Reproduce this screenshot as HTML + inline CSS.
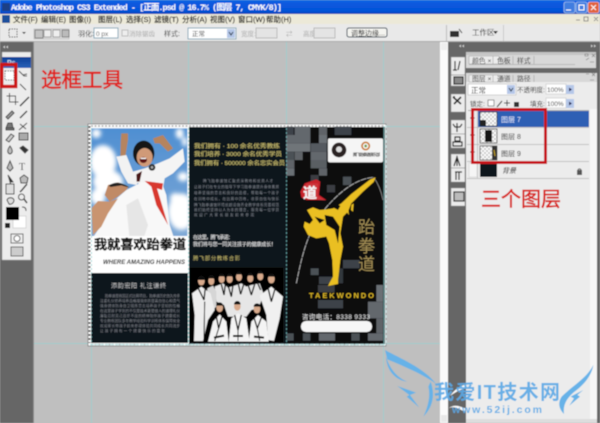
<!DOCTYPE html>
<html><head><meta charset="utf-8"><style>
html,body{margin:0;padding:0;background:#bfbfbf}
svg{display:block}
text{font-family:"Liberation Sans","Noto Sans CJK SC",sans-serif}
</style></head><body>
<svg width="600" height="423" viewBox="0 0 600 423" xmlns="http://www.w3.org/2000/svg">
<defs>
<linearGradient id="tb" x1="0" y1="0" x2="0" y2="1"><stop offset="0" stop-color="#1a6fe8"/><stop offset=".15" stop-color="#0a5be0"/><stop offset=".8" stop-color="#0553d8"/><stop offset="1" stop-color="#0a3fb0"/></linearGradient>
<linearGradient id="sky" x1="0" y1="0" x2="0" y2="1"><stop offset="0" stop-color="#4f8fd2"/><stop offset="1" stop-color="#7fa9d6"/></linearGradient>
<linearGradient id="bl" x1="0" y1="0" x2="0" y2="1"><stop offset="0" stop-color="#0d3f96"/><stop offset="1" stop-color="#2a62b8"/></linearGradient>
<pattern id="chk" width="4" height="4" patternUnits="userSpaceOnUse"><rect width="4" height="4" fill="#fff"/><rect width="2" height="2" fill="#ccc"/><rect x="2" y="2" width="2" height="2" fill="#ccc"/></pattern>
<filter id="b" x="-2%" y="-2%" width="104%" height="104%"><feGaussianBlur stdDeviation="0.45"/></filter>
<filter id="b2"><feGaussianBlur stdDeviation="6"/></filter>
<clipPath id="skyclip"><rect x="10" y="10" width="288" height="325"/></clipPath>
</defs>
<g filter="url(#b)">
<rect width="600" height="423" fill="#bfbfbf"/>
<rect y="0" width="600" height="14" fill="url(#tb)"/>
<rect y="14" width="600" height="11" fill="#ece9d8"/>
<rect y="24" width="600" height="18" fill="#e9e9e9"/>
<rect y="41" width="600" height="1" fill="#aaa"/>
<rect x="2" y="3" width="8" height="8" fill="#1b3f86"/>
<text x="11" y="10" font-size="8.500" fill="#fff" font-weight="bold" textLength="271" lengthAdjust="spacing" style="font-family:'Liberation Mono','Noto Sans CJK SC',monospace">Adobe Photoshop CS3 Extended - [正面.psd @ 16.7% (图层 7, CMYK/8)]</text>
<rect x="564" y="2" width="11" height="11" rx="2" fill="#3f7de0" stroke="#cde" stroke-width=".6"/>
<rect x="576" y="2" width="11" height="11" rx="2" fill="#3f7de0" stroke="#cde" stroke-width=".6"/>
<rect x="588" y="2" width="11" height="11" rx="2" fill="#e2603a" stroke="#fde" stroke-width=".6"/>
<path d="M566 10h5M579 5h5v5h-5zM591 5l5 5M596 5l-5 5" stroke="#fff" stroke-width="1" fill="none"/>
<rect x="2" y="15" width="8" height="8" fill="#1b4f9c"/>
<g font-size="7.500" fill="#111" stroke="#111" stroke-width=".15">
<text x="13" y="22">文件(F)</text><text x="41" y="22">编辑(E)</text><text x="69" y="22">图像(I)</text><text x="98" y="22">图层(L)</text><text x="126" y="22">选择(S)</text><text x="154" y="22">滤镜(T)</text><text x="182" y="22">分析(A)</text><text x="210" y="22">视图(V)</text><text x="238" y="22">窗口(W)</text><text x="266" y="22">帮助(H)</text>
</g>
<path d="M576 20h4M584 17h4v4h-4zM594 17l4 4M598 17l-4 4" stroke="#777" stroke-width=".8" fill="none"/>
<rect x="9" y="29" width="8" height="8" fill="none" stroke="#444" stroke-dasharray="1.500 1"/>
<path d="M22 32l2 2 2-2z" fill="#333"/>
<rect x="34" y="29" width="35" height="10" fill="#ddd" stroke="#aaa" stroke-width=".5"/>
<rect x="35" y="30" width="8" height="8" fill="#c4c4c4" stroke="#555" stroke-width=".6"/>
<rect x="44" y="30" width="7" height="7" fill="#eee" stroke="#777" stroke-width=".6"/>
<rect x="53" y="30" width="7" height="7" fill="#eee" stroke="#777" stroke-width=".6"/>
<rect x="62" y="30" width="7" height="7" fill="#bbb" stroke="#555" stroke-width=".6"/>
<text x="78" y="36" font-size="7" fill="#333">羽化:</text>
<rect x="94" y="28" width="24" height="10" fill="#fff" stroke="#8ab"/>
<text x="96" y="36" font-size="6.500" fill="#555">0 px</text>
<rect x="122" y="30" width="6" height="6" fill="#eee" stroke="#bbb"/>
<text x="129" y="36" font-size="6.500" fill="#aaa">消除锯齿</text>
<text x="164" y="36" font-size="7" fill="#333">样式:</text>
<rect x="188" y="28" width="48" height="11" fill="#fff" stroke="#8ab"/>
<text x="192" y="36" font-size="6.500" fill="#333">正常</text>
<rect x="227" y="29" width="8" height="9" fill="#b5c7e8"/><path d="M229 32l2 3 2-3" stroke="#234" fill="none"/>
<text x="241" y="36" font-size="6.500" fill="#aaa">宽度:</text>
<rect x="256" y="28" width="21" height="10" fill="#e4e4e4" stroke="#bbb"/>
<text x="286" y="36" font-size="6.500" fill="#aaa">⇄</text>
<text x="303" y="36" font-size="6.500" fill="#aaa">高度:</text>
<rect x="314" y="28" width="21" height="10" fill="#e4e4e4" stroke="#bbb"/>
<rect x="347" y="28" width="40" height="9" rx="2" fill="#f4f4f0" stroke="#345"/>
<text x="351" y="35.500" font-size="7" fill="#222">调整边缘...</text>
<rect x="446" y="25" width="1" height="16" fill="#bbb"/>
<rect x="450" y="31" width="9" height="6" fill="#333"/><path d="M459 29l3 4" stroke="#333"/>
<text x="472" y="35" font-size="7.500" fill="#222">工作区</text><path d="M493 31l5 0-2.500 3z" fill="#222"/>
<rect x="503" y="25" width="1" height="16" fill="#ccc"/>
<rect x="0" y="42" width="34" height="381" fill="#666"/>
<rect x="33" y="42" width="1" height="381" fill="#888"/>
<path d="M3 47l2-1.500v3zM6 47l2-1.500v3z" fill="#ccc"/>
<rect x="2" y="52" width="29" height="208" fill="#ececec" stroke="#999" stroke-width=".5"/>
<rect x="2" y="57" width="29" height="11" fill="url(#bl)"/>
<text x="7" y="65" font-size="7" fill="#cde" font-weight="bold">Ps</text>
<g stroke="#444" fill="none" stroke-width="1">
<rect x="5" y="71" width="9" height="9" stroke="#666" stroke-dasharray="1.500 1" fill="#fff"/>
<path d="M19 71l5 5h3M23 75l4-1"/>
<path d="M20 84l6 6"/>
<path d="M9.500 93v9h9M6.500 96h9v9"/>
<path d="M20 106l7-7 2-2" stroke-width="1.500"/>
<path d="M6 117l6-6 2 2-6 6z" fill="#999"/>
<path d="M20 118l7-7" stroke-width="1.400"/>
<path d="M8 123h4l1 5H6zM6 128h8v2H6z" fill="#777"/>
<path d="M19 130l8-7M20 124l6 5"/>
<path d="M6 140l5-6 3 2-5 6z" fill="#ccc"/>
<rect x="19" y="133" width="9" height="7" fill="#aaa"/>
<path d="M10 146c3 4 3 7 0 8-3-1-3-4 0-8z" fill="#bbb"/>
<path d="M20 148l5 5 3-3-5-4z" fill="#333"/>
<path d="M10 161l3 7-3 3-3-3z" fill="#bbb"/>
<text x="19" y="170" font-size="10" fill="#333" stroke="none" style="font-family:'Liberation Serif',serif">T</text>
<path d="M8 175l5 7-3 0 1 3z" fill="#222"/>
<path d="M20 178l4-3 4 3-1 5h-6z" fill="#bbb"/>
<path d="M6 184h8v10H6z" fill="#ddd"/>
<path d="M27 184l-5 6-2 2" stroke-width="1.500"/>
<path d="M7 200c1-3 6-3 7 0 0 3-3 5-5 4z" fill="#ddd"/>
<circle cx="21.500" cy="197" r="3"/>
<path d="M24 199l3 4" stroke-width="1.500"/>
</g>
<rect x="13" y="216" width="13" height="12" fill="#fff" stroke="#bbb" stroke-width=".5"/>
<rect x="6" y="207" width="13" height="13" fill="#000"/>
<path d="M22 207c3 0 4 1 4 4" stroke="#333" fill="none"/>
<rect x="5" y="223" width="5" height="5" fill="#222"/>
<rect x="11" y="234" width="12" height="9" fill="#eee" stroke="#666"/><circle cx="17" cy="238.500" r="3" fill="#fff" stroke="#666"/>
<rect x="11" y="247" width="12" height="9" fill="#ccc" stroke="#666"/>
<g stroke="#a0cccc" stroke-width="1">
<path d="M91.500 42V423M188.500 42V124M286.500 42V124M383.500 42V423M34 126.500H440M34 343.500H440"/>
</g>
<rect x="88" y="124" width="298" height="222" fill="#fff" stroke="#444" stroke-width=".5"/>
<!-- left photo, coordinates from crop -->
<g transform="translate(88,125) scale(.33333)">
<rect x="10" y="10" width="288" height="325" fill="url(#sky)"/>
<g clip-path="url(#skyclip)"><g fill="#fff" filter="url(#b2)">
<ellipse cx="45" cy="110" rx="40" ry="50"/><ellipse cx="60" cy="170" rx="45" ry="35"/><ellipse cx="30" cy="215" rx="22" ry="25"/>
<ellipse cx="280" cy="260" rx="40" ry="55"/><ellipse cx="262" cy="220" rx="16" ry="16"/><ellipse cx="285" cy="155" rx="16" ry="14"/>
<ellipse cx="275" cy="25" rx="12" ry="16"/><ellipse cx="25" cy="25" rx="14" ry="14"/><ellipse cx="290" cy="50" rx="8" ry="14"/>
</g></g>
<path d="M100 25L120 25 120 45 112 95 97 95 98 50Z" fill="#b5845f"/>
<path d="M195 40L225 30 255 70 240 80 215 55 200 55Z" fill="#b5845f"/>
<path d="M85 95L115 90 135 140 155 165 145 180 120 175 100 140Z" fill="#f2f2f2"/>
<path d="M135 140L170 130 210 115 245 100 285 70 290 110 255 145 230 160 225 190 150 175Z" fill="#f4f4f4"/>
<ellipse cx="167" cy="85" rx="32" ry="38" fill="#141414"/>
<ellipse cx="170" cy="97" rx="24" ry="28" fill="#d09a78"/>
<ellipse cx="166" cy="105" rx="11" ry="9" fill="#5e1414"/>
<rect x="158" y="98" width="16" height="4" fill="#fff"/>
<circle cx="192" cy="127" r="10" fill="#2a2a2a"/><circle cx="192" cy="127" r="4" fill="#aaa"/>
<path d="M145 148L162 138 155 170 146 170Z" fill="#4a1818"/>
<path d="M10 345L40 300 75 230 115 195 160 172 220 170 235 210 245 300 260 345Z" fill="#f8f8f8"/>
<path d="M115 240L150 220 180 300 165 345 125 345Z" fill="#e6e6e6"/>
<path d="M10 250L30 228 65 230 90 220 60 265 40 305 15 330Z" fill="#c9946f"/>
<path d="M50 210L60 180 90 172 122 185 115 195 90 215 65 230Z" fill="#c08a66"/>
<path d="M62 182Q90 162 125 188L100 181 68 186Z" fill="#222"/>
<path d="M170 168L225 175 222 195 207 190 225 250 240 300 205 240 190 185Z" fill="#d8392e"/>
</g>
<rect x="91" y="236" width="97" height="37" fill="#fff"/>
<text x="94" y="249" font-size="13.200" font-weight="bold" fill="#111" textLength="92" stroke="#111" stroke-width=".35">我就喜欢跆拳道</text>
<text x="103" y="264" font-size="6" font-weight="bold" font-style="italic" fill="#222" textLength="82">WHERE AMAZING HAPPENS</text>
<rect x="91" y="273" width="97" height="70" fill="#10161f"/>
<text x="111" y="288" font-size="6.200" fill="#c9c9c9" textLength="55">添韵宏阳  礼注谦终</text>
<g font-size="3.600" fill="#85888d">
<text x="105" y="297" textLength="75">跆拳道是我国正式比赛项目，跆拳道历史悠久传承</text>
<text x="100" y="302" textLength="80">注重礼仪修养培养品格增强体质提高自信心和勇气</text>
<text x="100" y="307" textLength="80">强身健体防身自卫锻炼意志培养孩子坚韧的性格</text>
<text x="100" y="312" textLength="80">在这里孩子学到的不仅是技术更是做人的道理礼仪</text>
<text x="100" y="317" textLength="80">廉耻忍耐克己百折不屈的精神陪伴孩子健康成长</text>
<text x="100" y="322" textLength="80">专业教练团队多年教学经验科学训练体系保障安全</text>
<text x="100" y="327" textLength="80">欢迎家长带孩子前来参观体验共同成长共同进步</text>
<text x="100" y="332" textLength="65">让孩子拥有一个健康快乐的童年</text>
</g>
<path d="M89.500 126V343" stroke="#555" stroke-width="2" stroke-dasharray="2 2" fill="none"/>
<path d="M91 126H385M91 344.500H385" stroke="#aaa" stroke-width="1.500" stroke-dasharray="2 1.500" fill="none"/>
<!-- middle -->
<rect x="189" y="127" width="98" height="217" fill="#0e151e"/>
<g font-size="5.900" fill="#cfc270" stroke="#cfc270" stroke-width=".12">
<text x="194" y="148" textLength="86" lengthAdjust="spacingAndGlyphs">我们拥有 · 100 余名优秀教练</text>
<text x="194" y="156" textLength="88" lengthAdjust="spacingAndGlyphs">我们培养 · 3000 余名优秀学员</text>
<text x="194" y="165" textLength="91" lengthAdjust="spacingAndGlyphs">我们拥有 · 500000 余名忠实会员</text>
</g>
<g font-size="3.500" fill="#8b9096">
<text x="203" y="182" textLength="70">腾飞跆拳道馆汇聚资深教练和优秀人才</text>
<text x="194" y="188" textLength="85">让孩子们在专业的指导下学习跆拳道提升身体素质</text>
<text x="194" y="194" textLength="85">培养坚强的意志和良好的品德，帮助每一个孩子</text>
<text x="194" y="200" textLength="85">在训练中成长，在比赛中历练，收获自信与快乐</text>
<text x="194" y="206" textLength="85">腾飞跆拳道馆环境优越设施齐全教学体系完善规范</text>
<text x="194" y="211" textLength="85">我们始终坚持以人为本的理念，服务每一位学员</text>
<text x="194" y="216" textLength="60">欢迎广大家长朋友前来参观</text>
</g>
<g font-size="5" fill="#e6e6e6" stroke="#e6e6e6" stroke-width=".1">
<text x="193" y="239" textLength="40">在这里，腾飞承诺：</text>
<text x="193" y="246" textLength="83">我们将与您一同关注孩子的健康成长！</text>
</g>
<text x="193" y="260" font-size="5.300" fill="#cfc270" textLength="47">腾飞部分教练合影</text>
<!-- team, coordinates from crop -->
<g transform="translate(188,265) scale(.33333)">
<rect x="6" y="8" width="280" height="224" fill="#060606"/>
<path d="M80 65L105 55 120 68 140 62 160 55 175 65 190 60 215 55 228 90 210 130 190 135 175 155 120 155 108 120 85 110Z" fill="#e6e6e6"/>
<path d="M58 70L75 62 85 80 85 125 70 140 58 100Z" fill="#d6d6d6"/>
<path d="M12 85L40 65 68 85 80 135 60 165 45 228 18 228 20 150Z" fill="#ededed"/>
<path d="M215 92L250 65 285 95 275 160 258 228 240 225 235 150Z" fill="#f0f0f0"/>
<path d="M60 230L75 170 95 148 115 170 122 230Z" fill="#f4f4f4"/>
<path d="M122 230L130 160 150 145 175 160 185 230Z" fill="#f4f4f4"/>
<path d="M182 230L190 170 210 150 235 170 242 230Z" fill="#f4f4f4"/>
<g fill="#d8aa8c">
<ellipse cx="40" cy="48" rx="10" ry="13"/><ellipse cx="70" cy="48" rx="9" ry="12"/><ellipse cx="101" cy="42" rx="9" ry="12"/><ellipse cx="125" cy="42" rx="9" ry="12"/><ellipse cx="153" cy="36" rx="9" ry="12"/><ellipse cx="187" cy="40" rx="9" ry="12"/><ellipse cx="217" cy="34" rx="9" ry="12"/><ellipse cx="250" cy="42" rx="10" ry="13"/>
<ellipse cx="95" cy="128" rx="10" ry="13"/><ellipse cx="148" cy="124" rx="10" ry="13"/><ellipse cx="207" cy="132" rx="10" ry="13"/>
</g>
<g fill="#0b0b0b">
<path d="M29 45a11 13 0 0 1 22 0zM60 40a10 10 0 0 1 20 0zM92 34a9 9 0 0 1 18 0zM116 34a9 9 0 0 1 18 0zM144 28a9 9 0 0 1 18 0zM178 32a9 9 0 0 1 18 0zM208 26a9 9 0 0 1 18 0zM240 35a10 10 0 0 1 20 0zM85 122a10 10 0 0 1 20 0zM138 118a10 10 0 0 1 20 0zM197 125a10 10 0 0 1 20 0z"/>
</g>
<g stroke="#111" stroke-width="4" fill="none">
<path d="M30 68L48 105M52 68L48 105M240 68L250 110M262 68L250 110M100 58L108 90M112 58L108 90M120 60L130 95M135 60L130 95M150 52L158 88M168 55L158 88M180 58L190 90M200 58L190 90M208 52L218 75"/>
<path d="M85 155L92 190 102 155M140 150L150 195 160 150M198 158L208 190 220 158" />
<path d="M50 110L48 228M92 190L80 228M150 195L150 228M208 190L215 228" stroke-width="3"/>
<path d="M78 218L108 212M135 213L165 213M198 215L228 218" stroke-width="6"/>
</g>
</g>
<!-- right -->
<rect x="287" y="127" width="98" height="217" fill="#0a0b0f"/>
<g transform="translate(283,120) scale(.33333)">
<g fill="#555a60">
<rect x="10" y="20" width="22" height="25" fill="#3d4248"/><rect x="35" y="20" width="47" height="25" fill="#63686d"/><rect x="108" y="20" width="24" height="25" fill="#5e6368"/><rect x="155" y="20" width="50" height="25" fill="#3d4248"/>
<rect x="10" y="45" width="72" height="25" fill="#63686d"/><rect x="108" y="45" width="24" height="25" fill="#6a6f74"/>
<rect x="10" y="70" width="72" height="25" fill="#6f7479"/><rect x="83" y="70" width="48" height="25" fill="#555a60"/><rect x="132" y="70" width="24" height="25" fill="#33373c"/>
<rect x="10" y="95" width="24" height="25" fill="#4c5157"/><rect x="35" y="95" width="24" height="25" fill="#5e6368"/><rect x="83" y="95" width="48" height="25" fill="#63686d"/>
<rect x="10" y="120" width="24" height="25" fill="#5e6368"/><rect x="83" y="120" width="48" height="25" fill="#5a5f64"/>
<rect x="10" y="145" width="24" height="22" fill="#6a6f74"/><rect x="108" y="145" width="24" height="22" fill="#5e6368"/>
<rect x="83" y="165" width="24" height="25" fill="#3a3e43"/><rect x="180" y="170" width="25" height="25" fill="#4c5157"/><rect x="132" y="195" width="24" height="22" fill="#3a3e43"/>
<rect x="180" y="420" width="50" height="25" fill="#3d4248"/><rect x="83" y="445" width="24" height="20" fill="#4c5157"/><rect x="108" y="470" width="48" height="22" fill="#3d4248"/><rect x="156" y="445" width="24" height="45" fill="#33373c"/><rect x="105" y="495" width="50" height="22" fill="#3a3e43"/>
<rect x="280" y="495" width="20" height="50" fill="#6a6f74"/><rect x="255" y="545" width="45" height="50" fill="#63686d"/><rect x="280" y="595" width="20" height="45" fill="#5e6368"/><rect x="105" y="540" width="75" height="25" fill="#3d4248"/>
<rect x="10" y="640" width="22" height="22" fill="#4c5157"/><rect x="60" y="640" width="22" height="22" fill="#4c5157"/><rect x="108" y="640" width="48" height="22" fill="#63686d"/><rect x="205" y="640" width="25" height="22" fill="#4c5157"/><rect x="255" y="640" width="45" height="22" fill="#63686d"/>
</g>
<rect x="135" y="55" width="165" height="72" rx="5" fill="#f5f5f5"/>
<circle cx="168" cy="90" r="22" fill="#2a2022"/><circle cx="168" cy="88" r="9" fill="#ddd"/>
<circle cx="248" cy="78" r="11" fill="none" stroke="#c87a28" stroke-width="5"/><circle cx="248" cy="78" r="4" fill="#6a9a3a"/>
<path d="M52 215L65 190 100 178 112 185 108 225 130 240 70 240 55 232Z" fill="#c8222a"/>
<path d="M70 190L105 190 105 228 130 243 60 232Z" fill="#d85a5a" opacity=".35"/>
<path d="M40 490C60 390 80 310 150 240 190 200 230 175 272 172" stroke="#b8b8b8" stroke-width="2.500" stroke-dasharray="18 2" fill="none"/>
<path d="M272 172C285 190 295 215 300 240" stroke="#999" stroke-width="2" fill="none"/>
<path d="M278 172L272 186 240 215 205 250 195 275 180 290 172 340 180 380 172 420 165 480 165 492 135 498 140 488 150 470 148 420 138 370 130 350 100 355 75 345 62 320 65 305 80 312 90 300 72 270 90 262 110 270 130 268 150 265 175 250 205 222 240 195 262 178Z" fill="#eabf22"/>
<path d="M125 285L150 290 170 320 165 370 155 330 130 315ZM95 290L125 300 110 310ZM150 262L158 250 172 258 165 270Z" fill="#0a0b0f"/>
<path d="M205 255L212 250 210 275 204 270ZM190 275L196 270 198 285Z" fill="#eabf22"/>
</g>
<text x="303" y="198" font-size="14" font-weight="bold" fill="#f4f4f4" stroke="#f4f4f4" stroke-width=".3">道</text>
<text x="353" y="156" font-size="4" fill="#444" font-weight="bold" textLength="27">腾飞跆拳道俱乐部</text>
<text x="358" y="233" font-size="17" fill="#a08b52">跆</text>
<text x="358" y="252" font-size="17" fill="#a08b52">拳</text>
<text x="358" y="270" font-size="17" fill="#a08b52">道</text>
<text x="309" y="298" font-size="7.500" font-weight="bold" fill="#dcb628" textLength="65">TAEKWONDO</text>
<text x="302" y="319" font-size="6.500" fill="#e8e8e8" textLength="68">咨询电话：8338 9333</text>
<rect x="301" y="321" width="71" height="11" rx="5" fill="#f6f6f6"/>
<path d="M90 344.500H386" stroke="#bfe6e6" stroke-width="1.500" stroke-dasharray="4 1" fill="none"/>
<path d="M386 125V345" stroke="#c8e0e0" stroke-width="1.500" stroke-dasharray="3 2" fill="none"/>
<path d="M384 126V345" stroke="#8fd4d4" stroke-width=".7" fill="none"/>
<path d="M91.500 128V345M188.500 128V345M286.500 128V345" stroke="#7fcccc" stroke-width=".7" stroke-dasharray="2 2" fill="none"/>
<text x="41" y="87" font-size="20.500" fill="#e0201c" stroke="#e0201c" stroke-width=".5" textLength="82">选框工具</text>
<rect x="1.700" y="64.500" width="14" height="22" fill="none" stroke="#cc1518" stroke-width="3.400"/>
<rect x="440" y="42" width="8" height="381" fill="#fbfbfb"/>
<rect x="441" y="43" width="6" height="7" fill="#eee"/>
<rect x="441" y="415" width="6" height="7" fill="#e8e8e8"/>
<rect x="448" y="42" width="152" height="381" fill="#666"/>
<path d="M462 46l2-1.500v3zM459 46l2-1.500v3zM593 46l-2-1.500v3zM596 46l-2-1.500v3z" fill="#ccc"/>
<g fill="#ececec" stroke="#888" stroke-width=".5">
<rect x="451" y="57" width="14" height="18"/><rect x="451" y="75" width="14" height="11"/>
<rect x="451" y="94" width="14" height="18"/>
<rect x="451" y="120" width="14" height="14"/><rect x="451" y="134" width="14" height="14"/>
<rect x="451" y="154" width="14" height="14"/><rect x="451" y="168" width="14" height="14"/>
<rect x="451" y="188" width="14" height="18"/>
</g>
<g stroke="#222" fill="none" stroke-width="1.200">
<path d="M455 61v9M460 61l-2 9M453 70h4"/>
<rect x="454" y="77" width="9" height="7" fill="#888"/>
<path d="M453 97l8 7M461 97l-7 7M453 97l2 0" stroke-width="1.600"/>
<path d="M457 123v9M453 124l2 3h5l2-3"/>
<path d="M455 137h5v4h-5zM453 142h9v4h-9z"/>
<path d="M454 166l3-9 3 9M457 156v10"/>
<path d="M455 172h7M456 172v8M459 172v8"/>
<rect x="454" y="192" width="10" height="9" fill="#bbb"/>
</g>
<rect x="466" y="52" width="130" height="16" fill="#d8d8d8"/>
<rect x="466" y="52" width="130" height="3" fill="#c4c4c4"/>
<path d="M469 56h30l2 8h-32z" fill="#ececec" stroke="#999" stroke-width=".5"/>
<text x="472" y="63" font-size="6.800" fill="#333">颜色 ×</text>
<text x="497" y="63" font-size="6.800" fill="#333">色板</text><text x="517" y="63" font-size="6.800" fill="#333">样式</text>
<path d="M493 56v8M513 56v8M534 56v8M469 64.500H575" stroke="#999" stroke-width=".5"/>
<path d="M585 54h3v2h-3zM592 54l3 3M595 54l-3 3M590 62h4M589 58l-3 2" stroke="#777" stroke-width=".6" fill="none"/>
<rect x="466" y="73" width="131" height="350" fill="#ececec"/>
<rect x="466" y="73" width="131" height="9" fill="#d8d8d8"/>
<path d="M469 75h30l2 7h-32z" fill="#ececec" stroke="#aaa" stroke-width=".5"/>
<text x="472" y="81" font-size="6.800" fill="#333">图层 ×</text>
<text x="497" y="81" font-size="6.800" fill="#333">通道</text><text x="517" y="81" font-size="6.800" fill="#333">路径</text>
<path d="M493 75v7M513 75v7M534 75v7" stroke="#999" stroke-width=".5"/>
<path d="M586 74h3M592 73l3 3M595 73l-3 3M590 80h4" stroke="#777" stroke-width=".6" fill="none"/>
<rect x="468" y="84" width="48" height="11" fill="#fff" stroke="#bbb" stroke-width=".6"/>
<text x="471" y="93" font-size="7.500" fill="#222">正常</text>
<rect x="507" y="85" width="8" height="9" fill="#b5c7e8"/><path d="M509 88l2 3 2-3" stroke="#234" fill="none"/>
<text x="517" y="92" font-size="6.500" fill="#222">不透明度:</text>
<rect x="546" y="84" width="20" height="10" fill="#fff" stroke="#bbb" stroke-width=".5"/><text x="547" y="92" font-size="6.500" fill="#333">100%</text>
<rect x="566" y="85" width="8" height="9" fill="#b5c7e8"/><path d="M569 87.500l3 2-3 2z" fill="#225"/>
<text x="470" y="106" font-size="6.500" fill="#222">锁定:</text>
<rect x="488" y="100" width="6" height="6" fill="#fff" stroke="#555" stroke-width=".6"/>
<path d="M497 107l5-6M504 103h6M507 100v6" stroke="#333" fill="none"/>
<rect x="514" y="102" width="5" height="5" fill="#333"/>
<text x="530" y="106" font-size="6.500" fill="#222">填充:</text>
<rect x="546" y="98" width="20" height="10" fill="#fff" stroke="#bbb" stroke-width=".5"/><text x="547" y="106" font-size="6.500" fill="#333">100%</text>
<rect x="566" y="99" width="8" height="9" fill="#b5c7e8"/><path d="M569 101.500l3 2-3 2z" fill="#225"/>
<rect x="468" y="110" width="121" height="1" fill="#aaa"/>
<rect x="478" y="111" width="111" height="16" fill="#2f5fb4"/>
<path d="M467 127.500H589M467 144.500H589M467 161.500H589M467 178.500H589M477.500 111V178" stroke="#b5b5b5" stroke-width=".7"/>
<path d="M470 118l2-2 3 2-3 2z M470 135l2-2 3 2-3 2z M470 152l2-2 3 2-3 2z" fill="#333"/>
<rect x="469" y="163" width="8" height="14" fill="#f5f5f5" stroke="#ccc" stroke-width=".5"/>
<rect x="480" y="112" width="17" height="14" fill="url(#chk)" stroke="#222" stroke-width=".6"/>
<rect x="480" y="120" width="6" height="6" fill="#222"/>
<rect x="480" y="129" width="17" height="14" fill="url(#chk)" stroke="#222" stroke-width=".6"/>
<rect x="485" y="130" width="7" height="12" fill="#151515"/>
<rect x="480" y="146" width="17" height="14" fill="url(#chk)" stroke="#222" stroke-width=".6"/>
<rect x="492" y="146" width="5" height="14" fill="#333"/><path d="M494 150l1 6" stroke="#c9a520"/>
<rect x="480" y="163" width="17" height="14" fill="#0e151e"/>
<text x="501" y="122" font-size="7" fill="#dfe8ff">图层 7</text>
<text x="501" y="139" font-size="7" fill="#222">图层 8</text>
<text x="501" y="156" font-size="7" fill="#222">图层 9</text>
<text x="502" y="173" font-size="7" fill="#222" font-style="italic">背景</text>
<rect x="577" y="170" width="5" height="5" fill="#555"/><path d="M578 170a1.600 1.800 0 0 1 3 0" stroke="#555" fill="none"/>
<rect x="472.500" y="109.500" width="73" height="53" fill="none" stroke="#c6161a" stroke-width="3"/>
<text x="481" y="206" font-size="20" fill="#d8201c" stroke="#d8201c" stroke-width=".5" textLength="80">三个图层</text>
<rect x="590" y="109" width="7" height="314" fill="#f6f6f6"/>
<rect x="597" y="42" width="3" height="381" fill="#666"/>
<rect x="466" y="419" width="131" height="4" fill="#ddd"/>
<!-- watermark -->
<g transform="translate(360,340) scale(.33333)" fill="#66b2e8">
<path d="M75 30C120 55 195 85 228 132 195 105 130 78 82 58Z"/>
<path d="M78 50C90 90 115 115 142 125 110 122 80 95 78 50Z"/>
<path d="M112 138L168 158 150 165 178 203 140 170 148 165Z"/>
<path d="M212 125C228 170 215 205 190 230 205 200 212 165 205 140Z"/>
<path d="M700 75C680 115 640 135 605 170 592 190 598 208 612 222 608 195 620 172 650 150 675 130 695 105 700 75Z"/>
<path d="M670 150L632 170 642 175 628 197 660 170 652 165Z"/>
<path d="M270 168C285 148 300 138 316 134L316 146C300 148 285 158 270 168Z" fill="#fff"/>
<path d="M265 205C285 195 300 210 316 215L316 205C300 200 285 190 265 205Z" fill="#fff"/>
</g>
<text x="434" y="399" font-size="20" font-weight="bold" fill="#5aa9e6" fill-opacity=".9" textLength="126">我爱IT技术网</text>
<text x="452" y="413" font-size="10.500" font-weight="bold" fill="#5aa9e6" fill-opacity=".9" textLength="90">www.52ij.com</text>
</g>
</svg>
</body></html>
